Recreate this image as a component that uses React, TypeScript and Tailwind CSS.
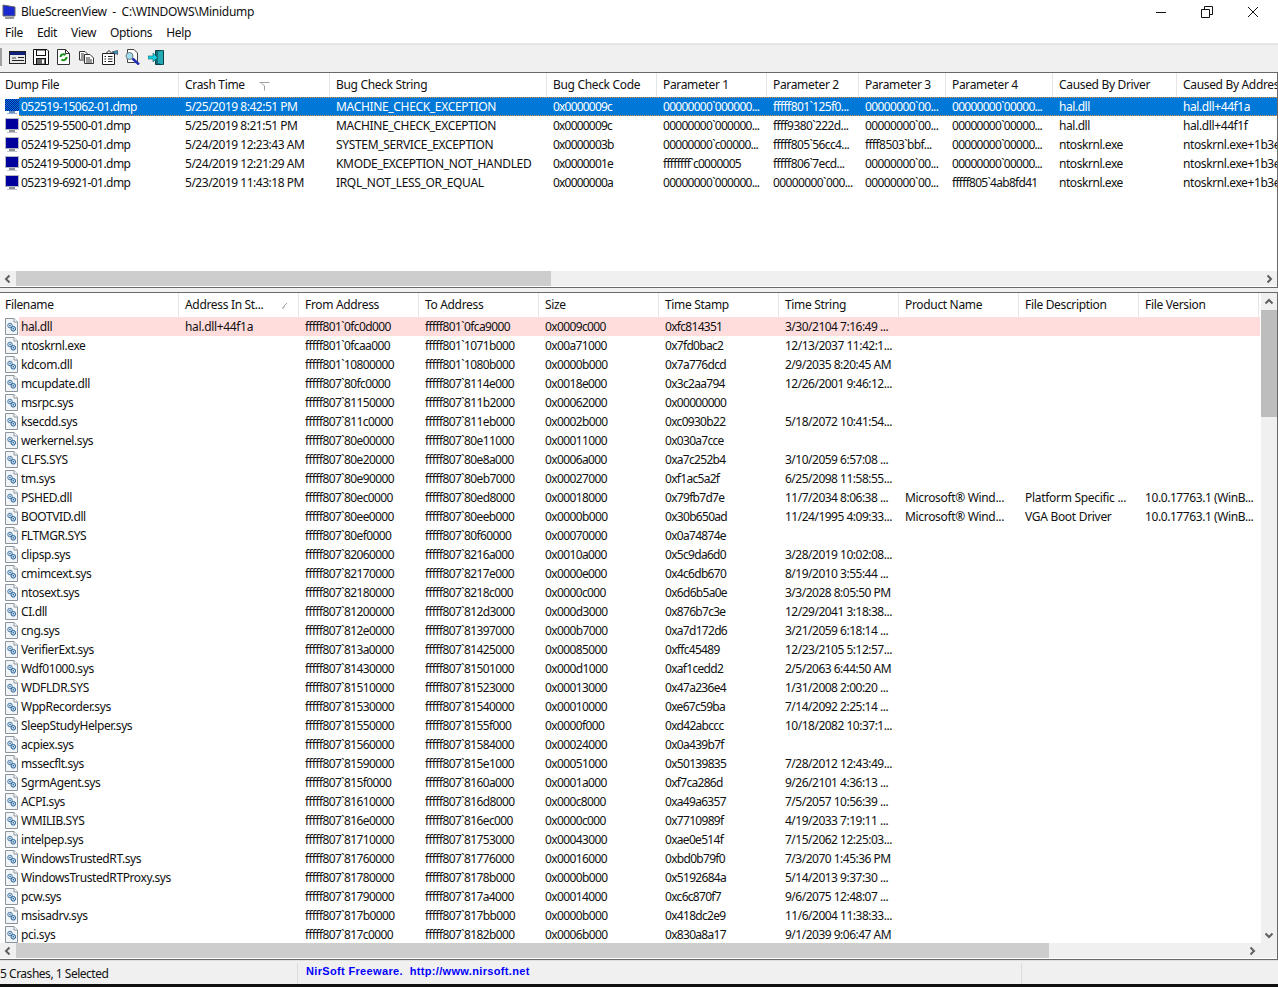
import React from 'react';

const font = { fontFamily: '"Noto Sans", sans-serif', letterSpacing: '-0.33px' };

const topCols = [179, 151, 217, 110, 110, 92, 87, 107, 124, 110];
// Noto digits run wider than the reference font, so number columns are tightened
const topTrack = ['tracking-[-0.55px]', 'tracking-[-0.48px]', 'tracking-[-0.33px]', 'tracking-[-0.8px]', 'tracking-[-0.72px]', 'tracking-[-0.6px]', 'tracking-[-0.6px]', 'tracking-[-0.72px]', 'tracking-[-0.45px]', 'tracking-[-0.4px]'];
const topHead = ['Dump File', 'Crash Time', 'Bug Check String', 'Bug Check Code', 'Parameter 1', 'Parameter 2', 'Parameter 3', 'Parameter 4', 'Caused By Driver', 'Caused By Address'];
const crashes = [
  ['052519-15062-01.dmp', '5/25/2019 8:42:51 PM', 'MACHINE_CHECK_EXCEPTION', '0x0000009c', '00000000`000000...', 'fffff801`125f0...', '00000000`00...', '00000000`00000...', 'hal.dll', 'hal.dll+44f1a'],
  ['052519-5500-01.dmp', '5/25/2019 8:21:51 PM', 'MACHINE_CHECK_EXCEPTION', '0x0000009c', '00000000`000000...', 'ffff9380`222d...', '00000000`00...', '00000000`00000...', 'hal.dll', 'hal.dll+44f1f'],
  ['052419-5250-01.dmp', '5/24/2019 12:23:43 AM', 'SYSTEM_SERVICE_EXCEPTION', '0x0000003b', '00000000`c00000...', 'fffff805`56cc4...', 'ffff8503`bbf...', '00000000`00000...', 'ntoskrnl.exe', 'ntoskrnl.exe+1b3e'],
  ['052419-5000-01.dmp', '5/24/2019 12:21:29 AM', 'KMODE_EXCEPTION_NOT_HANDLED', '0x0000001e', 'ffffffff`c0000005', 'fffff806`7ecd...', '00000000`00...', '00000000`00000...', 'ntoskrnl.exe', 'ntoskrnl.exe+1b3e'],
  ['052319-6921-01.dmp', '5/23/2019 11:43:18 PM', 'IRQL_NOT_LESS_OR_EQUAL', '0x0000000a', '00000000`000000...', '00000000`000...', '00000000`00...', 'fffff805`4ab8fd41', 'ntoskrnl.exe', 'ntoskrnl.exe+1b3e'],
];

const lowCols = [179, 120, 120, 120, 120, 120, 120, 120, 120, 120];
const lowTrack = ['tracking-[-0.4px]', 'tracking-[-0.33px]', 'tracking-[-0.62px]', 'tracking-[-0.62px]', 'tracking-[-0.62px]', 'tracking-[-0.7px]', 'tracking-[-0.5px]', 'tracking-[-0.33px]', 'tracking-[-0.3px]', 'tracking-[-0.42px]'];
const lowHead = ['Filename', 'Address In St...', 'From Address', 'To Address', 'Size', 'Time Stamp', 'Time String', 'Product Name', 'File Description', 'File Version'];
const drivers = [
  ['hal.dll', 'hal.dll+44f1a', 'fffff801`0fc0d000', 'fffff801`0fca9000', '0x0009c000', '0xfc814351', '3/30/2104 7:16:49 ...'],
  ['ntoskrnl.exe', '', 'fffff801`0fcaa000', 'fffff801`1071b000', '0x00a71000', '0x7fd0bac2', '12/13/2037 11:42:1...'],
  ['kdcom.dll', '', 'fffff801`10800000', 'fffff801`1080b000', '0x0000b000', '0x7a776dcd', '2/9/2035 8:20:45 AM'],
  ['mcupdate.dll', '', 'fffff807`80fc0000', 'fffff807`8114e000', '0x0018e000', '0x3c2aa794', '12/26/2001 9:46:12...'],
  ['msrpc.sys', '', 'fffff807`81150000', 'fffff807`811b2000', '0x00062000', '0x00000000', ''],
  ['ksecdd.sys', '', 'fffff807`811c0000', 'fffff807`811eb000', '0x0002b000', '0xc0930b22', '5/18/2072 10:41:54...'],
  ['werkernel.sys', '', 'fffff807`80e00000', 'fffff807`80e11000', '0x00011000', '0x030a7cce', ''],
  ['CLFS.SYS', '', 'fffff807`80e20000', 'fffff807`80e8a000', '0x0006a000', '0xa7c252b4', '3/10/2059 6:57:08 ...'],
  ['tm.sys', '', 'fffff807`80e90000', 'fffff807`80eb7000', '0x00027000', '0xf1ac5a2f', '6/25/2098 11:58:55...'],
  ['PSHED.dll', '', 'fffff807`80ec0000', 'fffff807`80ed8000', '0x00018000', '0x79fb7d7e', '11/7/2034 8:06:38 ...', 'Microsoft® Wind...', 'Platform Specific ...', '10.0.17763.1 (WinB...'],
  ['BOOTVID.dll', '', 'fffff807`80ee0000', 'fffff807`80eeb000', '0x0000b000', '0x30b650ad', '11/24/1995 4:09:33...', 'Microsoft® Wind...', 'VGA Boot Driver', '10.0.17763.1 (WinB...'],
  ['FLTMGR.SYS', '', 'fffff807`80ef0000', 'fffff807`80f60000', '0x00070000', '0x0a74874e', ''],
  ['clipsp.sys', '', 'fffff807`82060000', 'fffff807`8216a000', '0x0010a000', '0x5c9da6d0', '3/28/2019 10:02:08...'],
  ['cmimcext.sys', '', 'fffff807`82170000', 'fffff807`8217e000', '0x0000e000', '0x4c6db670', '8/19/2010 3:55:44 ...'],
  ['ntosext.sys', '', 'fffff807`82180000', 'fffff807`8218c000', '0x0000c000', '0x6d6b5a0e', '3/3/2028 8:05:50 PM'],
  ['CI.dll', '', 'fffff807`81200000', 'fffff807`812d3000', '0x000d3000', '0x876b7c3e', '12/29/2041 3:18:38...'],
  ['cng.sys', '', 'fffff807`812e0000', 'fffff807`81397000', '0x000b7000', '0xa7d172d6', '3/21/2059 6:18:14 ...'],
  ['VerifierExt.sys', '', 'fffff807`813a0000', 'fffff807`81425000', '0x00085000', '0xffc45489', '12/23/2105 5:12:57...'],
  ['Wdf01000.sys', '', 'fffff807`81430000', 'fffff807`81501000', '0x000d1000', '0xaf1cedd2', '2/5/2063 6:44:50 AM'],
  ['WDFLDR.SYS', '', 'fffff807`81510000', 'fffff807`81523000', '0x00013000', '0x47a236e4', '1/31/2008 2:00:20 ...'],
  ['WppRecorder.sys', '', 'fffff807`81530000', 'fffff807`81540000', '0x00010000', '0xe67c59ba', '7/14/2092 2:25:14 ...'],
  ['SleepStudyHelper.sys', '', 'fffff807`81550000', 'fffff807`8155f000', '0x0000f000', '0xd42abccc', '10/18/2082 10:37:1...'],
  ['acpiex.sys', '', 'fffff807`81560000', 'fffff807`81584000', '0x00024000', '0x0a439b7f', ''],
  ['mssecflt.sys', '', 'fffff807`81590000', 'fffff807`815e1000', '0x00051000', '0x50139835', '7/28/2012 12:43:49...'],
  ['SgrmAgent.sys', '', 'fffff807`815f0000', 'fffff807`8160a000', '0x0001a000', '0xf7ca286d', '9/26/2101 4:36:13 ...'],
  ['ACPI.sys', '', 'fffff807`81610000', 'fffff807`816d8000', '0x000c8000', '0xa49a6357', '7/5/2057 10:56:39 ...'],
  ['WMILIB.SYS', '', 'fffff807`816e0000', 'fffff807`816ec000', '0x0000c000', '0x7710989f', '4/19/2033 7:19:11 ...'],
  ['intelpep.sys', '', 'fffff807`81710000', 'fffff807`81753000', '0x00043000', '0xae0e514f', '7/15/2062 12:25:03...'],
  ['WindowsTrustedRT.sys', '', 'fffff807`81760000', 'fffff807`81776000', '0x00016000', '0xbd0b79f0', '7/3/2070 1:45:36 PM'],
  ['WindowsTrustedRTProxy.sys', '', 'fffff807`81780000', 'fffff807`8178b000', '0x0000b000', '0x5192684a', '5/14/2013 9:37:30 ...'],
  ['pcw.sys', '', 'fffff807`81790000', 'fffff807`817a4000', '0x00014000', '0xc6c870f7', '9/6/2075 12:48:07 ...'],
  ['msisadrv.sys', '', 'fffff807`817b0000', 'fffff807`817bb000', '0x0000b000', '0x418dc2e9', '11/6/2004 11:38:33...'],
  ['pci.sys', '', 'fffff807`817c0000', 'fffff807`8182b000', '0x0006b000', '0x830a8a17', '9/1/2039 9:06:47 AM'],
];

const MonitorIcon = ({ selected }: { selected?: boolean }) => (
  <svg width="16" height="16" viewBox="0 0 16 16" className="shrink-0">
    <defs>
      <pattern id="dither" width="2" height="2" patternUnits="userSpaceOnUse">
        <rect width="2" height="2" fill="#0078d7" />
        <rect width="1" height="1" fill="#00209c" />
        <rect x="1" y="1" width="1" height="1" fill="#00209c" />
      </pattern>
    </defs>
    <rect x="1" y="0" width="14" height="12" fill={selected ? 'url(#dither)' : '#b4b8be'} />
    <rect x="2" y="1" width="12" height="10" fill={selected ? 'url(#dither)' : '#00009c'} />
    <rect x="5" y="12" width="6" height="2" fill={selected ? '#6a8fc0' : '#8d9199'} />
    <rect x="3" y="14" width="10" height="1" fill={selected ? '#8fb0d8' : '#c2c5ca'} />
  </svg>
);

const FileIcon = () => (
  <svg width="15" height="17" viewBox="0 0 15 17" className="shrink-0">
    <path d="M1.500 .5H10L13.500 4V16.500H1.500Z" fill="#f2f5f8" stroke="#8b949c" />
    <path d="M10 .5V4H13.500" fill="#fff" stroke="#8b949c" />
    <circle cx="6" cy="7.500" r="2.300" fill="#cfe0ee" stroke="#4f7ea8" />
    <circle cx="6" cy="7.500" r=".7" fill="#27577f" />
    <circle cx="9.300" cy="10.800" r="2.300" fill="#cfe0ee" stroke="#1f5f98" />
    <circle cx="9.300" cy="10.800" r=".7" fill="#1f4f78" />
  </svg>
);

const Cell = ({ w, track, children }: { w: number; track: string; children?: React.ReactNode }) => (
  <div className={`shrink-0 overflow-hidden whitespace-nowrap pl-[6px] ${track}`} style={{ width: w }}>{children}</div>
);

const HeaderCell = ({ w, label, first, sort }: { w: number; label: string; first?: boolean; sort?: React.ReactNode }) => (
  <div className={first ? 'relative flex h-full shrink-0 items-center overflow-hidden whitespace-nowrap border-r border-[#e5e5e5] pl-[5px]' : 'relative flex h-full shrink-0 items-center overflow-hidden whitespace-nowrap border-r border-[#e5e5e5] pl-[6px]'} style={{ width: w }}>
    {label}
    {sort}
  </div>
);

const Arrow = ({ d, size = 10 }: { d: string; size?: number }) => (
  <svg width={size} height={size} viewBox="0 0 10 10"><path d={d} fill="none" stroke="#606060" strokeWidth="2" /></svg>
);

const HScroll = ({ thumb, corner }: { thumb: number; corner?: boolean }) => (
  <div className="mb-[1px] flex h-[15px] shrink-0 bg-[#f0f0f0]">
    <div className="flex w-[16px] shrink-0 items-center justify-center"><Arrow d="M6.500 1.500 3 5l3.500 3.500" /></div>
    <div className="bg-[#cdcdcd]" style={{ width: thumb }} />
    <div className="flex-1" />
    <div className="flex w-[17px] shrink-0 items-center justify-center"><Arrow d="M3.500 1.500 7 5 3.500 8.500" /></div>
    {corner && <div className="w-[17px] shrink-0" />}
  </div>
);

const ToolBar = () => (
  <div className="flex h-[28px] items-start border-t border-[#e3e3e3] bg-[#f0f0f0] pt-[3px]">
    <div className="mr-[4px] h-[18px] w-[2px] bg-[#a0a0a0]" />
    <div className="flex h-[18px] w-[23px] items-center justify-center">
      <svg width="17" height="13" viewBox="0 0 17 13">
        <rect x=".5" y=".5" width="16" height="12" fill="#e8e8e8" stroke="#222" />
        <rect x="1" y="1" width="15" height="3" fill="#10207c" />
        <rect x="3" y="6" width="4" height="2" fill="#999" />
        <rect x="9" y="6" width="6" height="1" fill="#222" />
        <rect x="3" y="9" width="12" height="1" fill="#222" />
      </svg>
    </div>
    <div className="flex h-[18px] w-[23px] items-center justify-center">
      <svg width="16" height="16" viewBox="0 0 16 16">
        <path d="M.5 .5H14L15.500 2V15.500H.5Z" fill="#fff" stroke="#111" />
        <rect x="3.500" y="1" width="9" height="5.500" fill="#fff" stroke="#111" />
        <rect x="3.500" y="9.500" width="9" height="6" fill="#666" stroke="#111" />
        <rect x="9" y="10.500" width="2" height="4" fill="#fff" />
      </svg>
    </div>
    <div className="flex h-[18px] w-[23px] items-center justify-center">
      <svg width="13" height="16" viewBox="0 0 13 16">
        <path d="M.5 .5H8.500L12.500 4.500V15.500H.5Z" fill="#fff" stroke="#333" />
        <path d="M8.500 .5V4.500H12.500" fill="none" stroke="#333" />
        <path d="M3.500 8a3 3 0 0 1 5-2" fill="none" stroke="#149014" strokeWidth="2" />
        <path d="M9.500 8a3 3 0 0 1-5 2.500" fill="none" stroke="#149014" strokeWidth="2" />
      </svg>
    </div>
    <div className="flex h-[18px] w-[23px] items-center justify-center">
      <svg width="15" height="13" viewBox="0 0 15 13">
        <path d="M.5 .5H6L8.500 3V9H.5Z" fill="#fff" stroke="#333" />
        <path d="M5.500 3.500H11L14.500 7V12.500H5.500Z" fill="#fff" stroke="#333" />
        <path d="M2 3H5M2 5H5M2 7H5M7 7H11M7 9H13M7 11H13" stroke="#333" />
      </svg>
    </div>
    <div className="flex h-[18px] w-[23px] items-center justify-center">
      <svg width="16" height="15" viewBox="0 0 16 15">
        <path d="M.5 3.500H12.500V14.500H.5Z" fill="#fff" stroke="#222" />
        <path d="M4 3.500 7 .5 10 3.500M2.500 6.500H4M6 6.500H10.500M2.500 9H4M6 9H10.500M2.500 11.500H4M6 11.500H10.500" fill="none" stroke="#222" />
        <path d="M10 2 15.500 .5V4.500Z" fill="#3aa0d8" stroke="#222" strokeWidth=".6" />
      </svg>
    </div>
    <div className="flex h-[18px] w-[23px] items-center justify-center">
      <svg width="15" height="16" viewBox="0 0 15 16">
        <path d="M2.500 .5H9L12.500 4V13.500H2.500Z" fill="#fff" stroke="#444" />
        <circle cx="4.500" cy="7" r="3.500" fill="#9fdcf0" stroke="#777" />
        <path d="M7.500 9.500 14 15.500" stroke="#2030b0" strokeWidth="2.500" />
      </svg>
    </div>
    <div className="flex h-[18px] w-[23px] items-center justify-center">
      <svg width="16" height="15" viewBox="0 0 16 15">
        <path d="M7.500 .5H15.500V14.500H7.500Z" fill="#0e6f78" stroke="#0a3f45" />
        <path d="M10 1.500 15 .5V14.500L10 13Z" fill="#23a8b4" />
        <path d="M0 6H5V3L9.500 7.500 5 12V9H0Z" fill="#16d0e0" stroke="#0a5f68" strokeWidth=".6" />
      </svg>
    </div>
  </div>
);

export default function App() {
  return (
    <div className="flex h-[987px] w-[1278px] flex-col overflow-hidden bg-white text-[12px] text-[#101010]" style={font}>
      {/* title bar */}
      <div className="flex h-[23px] shrink-0 items-center bg-white pl-[2px]">
        <svg width="14" height="16" viewBox="0 0 14 16" className="mr-[5px]">
          <path d="M1 1 13 3V12H1Z" fill="#1a2ad0" stroke="#666" />
          <rect x="3" y="13" width="9" height="2" fill="#999" />
        </svg>
        <span className="whitespace-pre tracking-[-0.27px]">BlueScreenView  -  C:\WINDOWS\Minidump</span>
        <div className="ml-auto flex items-center gap-[34px] pr-[19px]">
          <svg width="12" height="12" viewBox="0 0 12 12"><path d="M1 6.500H11" stroke="#111" /></svg>
          <svg width="12" height="12" viewBox="0 0 12 12"><path d="M.5 3.500H8.500V11.500H.5ZM3.500 3.500V.5H11.500V8.500H8.500" fill="none" stroke="#111" /></svg>
          <svg width="12" height="12" viewBox="0 0 12 12"><path d="M1 1 11 11M11 1 1 11" stroke="#111" /></svg>
        </div>
      </div>
      {/* menu */}
      <div className="flex h-[20px] shrink-0 items-center gap-[14px] pl-[5px]">
        {['File', 'Edit', 'View', 'Options', 'Help'].map(m => <span key={m}>{m}</span>)}
      </div>
      <div className="h-[1px] shrink-0 bg-[#e8e8e8]" />
      <ToolBar />
      {/* crash list */}
      <div className="flex h-[216px] shrink-0 flex-col border-t border-r border-b border-[#696969]">
        <div className="flex h-[24px] shrink-0 items-center overflow-hidden">
          {topHead.map((h, i) => (
            <HeaderCell key={h} w={topCols[i]} label={h} first={i === 0} sort={i === 1 ? (
              <svg width="11" height="9" viewBox="0 0 11 9" className="absolute left-[80px] top-[9px]"><path d="M.5 .5H10.500M2 .5 5.500 4V8.500" fill="none" stroke="#a0a0a0" /></svg>
            ) : undefined} />
          ))}
        </div>
        <div className="flex-1 overflow-hidden">
          {crashes.map((row, r) => (
            <div key={r} className="flex h-[19px]">
              <div className="flex w-[19px] shrink-0 items-center pl-[4px]"><MonitorIcon selected={r === 0} /></div>
              <div className={r === 0 ? 'flex h-[19px] flex-1 items-center overflow-hidden border-y border-dotted border-[#e8913a] bg-[#0078d7] text-white' : 'flex h-[19px] flex-1 items-center overflow-hidden'}>
                {row.map((c, i) => i === 0 ? (
                  <div key={i} className={`w-[160px] shrink-0 overflow-hidden whitespace-nowrap pl-[2px] ${topTrack[0]}`}>{c}</div>
                ) : <Cell key={i} w={topCols[i]} track={topTrack[i]}>{c}</Cell>)}
              </div>
            </div>
          ))}
        </div>
        <HScroll thumb={535} />
      </div>
      <div className="h-[4px] shrink-0 bg-[#f0f0f0]" />
      {/* module list */}
      <div className="flex h-[668px] shrink-0 flex-col border-t border-r border-b border-[#696969]">
        <div className="flex min-h-0 flex-1">
          <div className="min-w-0 flex-1 overflow-hidden">
            <div className="flex h-[24px] items-center overflow-hidden">
              {lowHead.map((h, i) => (
                <HeaderCell key={h} w={lowCols[i]} label={h} first={i === 0} sort={i === 1 ? (
                  <svg width="7" height="7" viewBox="0 0 7 7" className="absolute left-[102px] top-[9px]"><path d="M6 1 3 4V6H1" fill="none" stroke="#a0a0a0" /></svg>
                ) : undefined} />
              ))}
            </div>
            {drivers.map((row, r) => (
              <div key={r} className="flex h-[19px]">
                <div className="flex w-[19px] shrink-0 items-center pl-[4px]"><FileIcon /></div>
                <div className={r === 0 ? 'flex flex-1 items-center bg-[#ffdddd]' : 'flex flex-1 items-center'}>
                  {lowCols.map((w, i) => i === 0 ? (
                    <div key={i} className={`w-[160px] shrink-0 overflow-hidden whitespace-nowrap pl-[2px] ${lowTrack[0]}`}>{row[0]}</div>
                  ) : <Cell key={i} w={w} track={lowTrack[i]}>{row[i]}</Cell>)}
                </div>
              </div>
            ))}
          </div>
          <div className="ml-[1px] flex w-[16px] shrink-0 flex-col bg-[#f0f0f0]">
            <div className="flex h-[17px] items-center justify-center"><Arrow d="M1.500 6.500 5 3l3.500 3.500" /></div>
            <div className="h-[107px] bg-[#bdbdbd]" />
            <div className="flex-1" />
            <div className="flex h-[17px] items-center justify-center"><Arrow d="M1.500 3.500 5 7l3.500-3.500" /></div>
          </div>
        </div>
        <HScroll thumb={1033} corner />
      </div>
      {/* status bar */}
      <div className="flex h-[24px] shrink-0 border-t border-[#e0e0e0] bg-[#f0f0f0] pt-[2px]">
        <div className="h-full w-[297px] shrink-0 pt-[1px] leading-[20px] tracking-[-0.48px]">5 Crashes, 1 Selected</div>
        <div className="h-full w-[725px] shrink-0 border-l border-r border-[#dcdcdc] pl-[8px] text-[11px] font-bold leading-[16px] tracking-[0.34px] whitespace-pre text-[#0000ff]" style={{ fontFamily: '"Liberation Sans", sans-serif' }}>
          NirSoft Freeware.  http://www.nirsoft.net
        </div>
      </div>
      <div className="flex-1 bg-[#101010]" />
    </div>
  );
}
